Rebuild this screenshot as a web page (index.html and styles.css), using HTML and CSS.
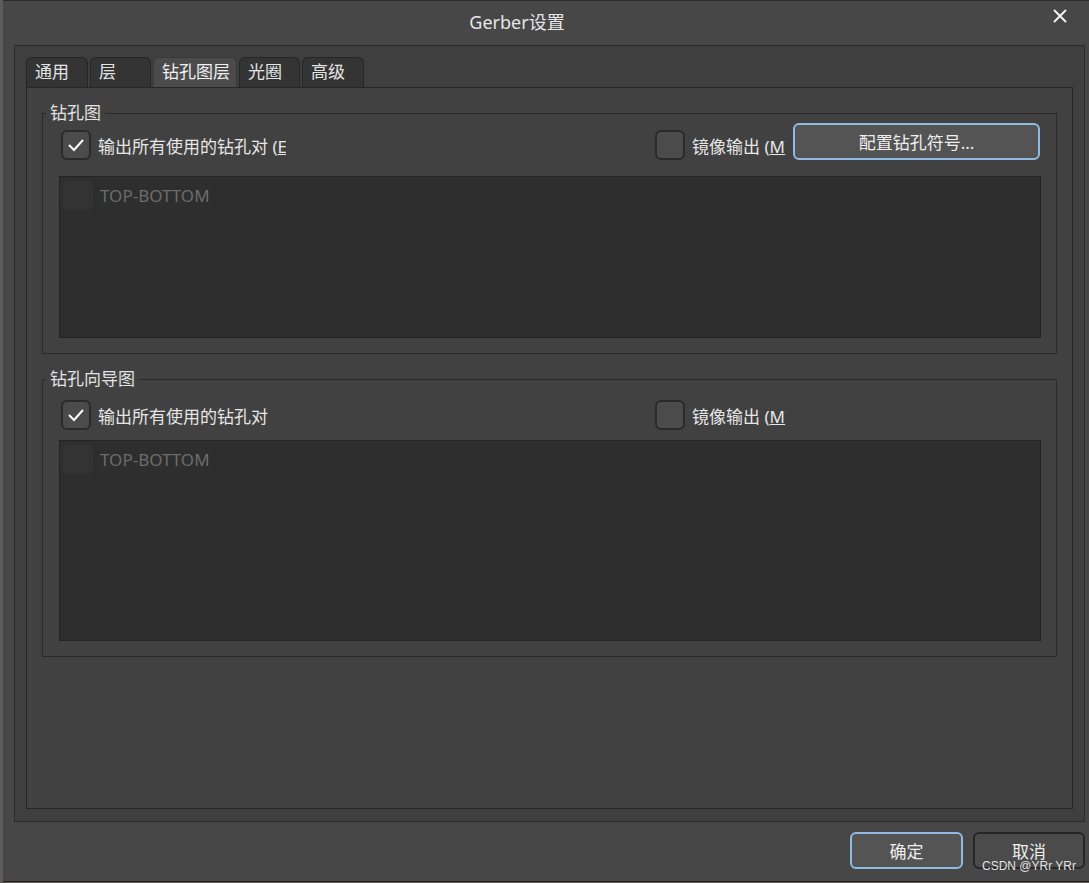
FILE: index.html
```html
<!DOCTYPE html>
<html lang="zh-CN">

<head>
    <meta charset="UTF-8">
    <title>Gerber设置</title>
    <link rel="stylesheet" href="styles.css">
</head>

<body>

    <div class="window">
        <div class="titlebar">
            <div class="title">Gerber设置</div>
            <div class="close">
                <svg width="16" height="16" viewBox="0 0 16 16">
                    <path d="M2 2 L14 14 M14 2 L2 14" stroke="#f2f2f2" stroke-width="2" fill="none"/>
                </svg>
            </div>
        </div>

        <div class="panel">
            <div class="tabs">
                <div class="tab" style="width: 62px">通用</div>
                <div class="tab" style="width: 61px">层</div>
                <div class="tab active" style="width: 84px">钻孔图层</div>
                <div class="tab" style="width: 61px">光圈</div>
                <div class="tab" style="width: 62px">高级</div>
            </div>

            <div class="pane">
                <fieldset class="group">
                    <legend>钻孔图</legend>
                    <div class="group-body">
                        <div class="row row-first">
                            <div class="option opt-main">
                                <span class="check checked">
                                    <svg width="18" height="14" viewBox="0 0 18 14"><path d="M2 7 L7 12 L16 2" stroke="#fff" stroke-width="2" fill="none"/></svg>
                                </span>
                                <span class="opt-label">输出所有使用的钻孔对 (<u>E</u>)</span>
                            </div>
                            <div class="option opt-mirror">
                                <span class="check"></span>
                                <span class="opt-label">镜像输出 (<u>M</u>)</span>
                            </div>
                            <button type="button" class="btn btn-focus">配置钻孔符号...</button>
                        </div>
                        <div class="list list-short">
                            <div class="list-item">
                                <span class="check disabled"></span>
                                <span>TOP-BOTTOM</span>
                            </div>
                        </div>
                    </div>
                </fieldset>

                <fieldset class="group group-second">
                    <legend>钻孔向导图</legend>
                    <div class="group-body">
                        <div class="row row-plain">
                            <div class="option opt-main">
                                <span class="check checked">
                                    <svg width="18" height="14" viewBox="0 0 18 14"><path d="M2 7 L7 12 L16 2" stroke="#fff" stroke-width="2" fill="none"/></svg>
                                </span>
                                <span class="opt-label">输出所有使用的钻孔对</span>
                            </div>
                            <div class="option opt-mirror">
                                <span class="check"></span>
                                <span class="opt-label">镜像输出 (<u>M</u>)</span>
                            </div>
                        </div>
                        <div class="list list-tall">
                            <div class="list-item">
                                <span class="check disabled"></span>
                                <span>TOP-BOTTOM</span>
                            </div>
                        </div>
                    </div>
                </fieldset>
            </div>
        </div>

        <div class="footer">
            <button type="button" class="btn btn-focus btn-ok">确定</button>
            <button type="button" class="btn btn-cancel">取消</button>
        </div>

        <div class="watermark">CSDN @YRr YRr</div>
    </div>

</body>

</html>
```

FILE: styles.css
```css
body {
    margin: 0;
    background-color: #5e5b59;
    font-family: "Noto Sans", "Noto Sans CJK SC", sans-serif;
    color: #e2e2e2;
}

.window {
    position: relative;
    width: 1086px;
    height: 882px;
    box-sizing: border-box;
    margin-left: 3px;
    background-color: #474747;
    border-top: 1px solid #2a2a2a;
    border-bottom: 1px solid #222;
}

.titlebar {
    display: flex;
    height: 44px;
    align-items: center;
}

.title {
    flex: 1;
    text-align: center;
    font-size: 18px;
    color: #e6e6e6;
    margin-top: -4px;
}

.close {
    width: 58px;
    display: flex;
    justify-content: center;
    margin-top: -14px;
}

.panel {
    width: 1071px;
    height: 777px;
    box-sizing: border-box;
    margin-left: 11px;
    padding: 11px 11px 12px 11px;
    background-color: #3f3f3f;
    border: 1px solid #2b2b2b;
}

.tabs {
    display: flex;
    gap: 2px;
    height: 30px;
}

.tab {
    box-sizing: border-box;
    height: 30px;
    padding-left: 8px;
    font-size: 17px;
    line-height: 28px;
    background-color: #343434;
    border: 1px solid #262626;
    border-bottom: none;
    border-radius: 6px 6px 0 0;
    color: #e4e4e4;
}

.tab.active {
    background-color: #4b4b4b;
    border-color: #3a3a3a;
    color: #f0f0f0;
}

.pane {
    height: 722px;
    box-sizing: border-box;
    padding: 15px 15px 0 15px;
    background-color: #414141;
    border: 1px solid #262626;
}

.group {
    width: 1015px;
    box-sizing: border-box;
    margin: 0;
    padding: 0;
    border: 1px solid #2a2a2a;
}

.group-second {
    margin-top: 15px;
}

.group legend {
    margin-left: 3px;
    padding: 0 4px;
    font-size: 17px;
    line-height: 20px;
    color: #e2e2e2;
}

.group-body {
    padding: 0 15px 15px 18px;
}

.row {
    display: grid;
    grid-template-columns: 594px 138px 247px;
    align-items: start;
}

.row-first {
    height: 37px;
}

.row-first .option {
    margin-top: 7px;
}

.row-plain {
    padding-top: 11px;
}

.option {
    display: flex;
    align-items: center;
    gap: 7px;
    overflow: hidden;
    white-space: nowrap;
    font-size: 17px;
    height: 30px;
}

.opt-main {
    width: 225px;
}

.opt-mirror {
    width: 131px;
}

.opt-label {
    color: #e6e6e6;
}

.check {
    flex: none;
    width: 30px;
    height: 30px;
    box-sizing: border-box;
    display: flex;
    align-items: center;
    justify-content: center;
    background-color: #4b4b4b;
    border: 2px solid #2a2a2a;
    border-radius: 6px;
}

.check.disabled {
    width: 32px;
    height: 31px;
    background-color: #333;
    border: 1px solid #2f2f2f;
}

.btn {
    font-family: "Noto Sans", "Noto Sans CJK SC", sans-serif;
    font-size: 17px;
    color: #eee;
    background-color: #545454;
    border: 2px solid #2b2b2b;
    border-radius: 6px;
    height: 37px;
    padding: 0;
    cursor: pointer;
}

.btn-focus {
    border-color: #8ebbe2;
}

.list {
    margin-left: -2px;
    box-sizing: border-box;
    background-color: #2e2e2e;
    border: 1px solid #242424;
    padding: 3px 2px;
}

.list-short {
    margin-top: 16px;
    height: 162px;
}

.list-tall {
    margin-top: 10px;
    height: 201px;
}

.list-item {
    display: flex;
    align-items: center;
    gap: 6px;
    font-size: 17px;
    color: #6c6c6c;
}

.footer {
    display: flex;
    justify-content: flex-end;
    gap: 10px;
    margin-top: 10px;
    padding-right: 4px;
}

.btn-ok {
    width: 113px;
}

.btn-cancel {
    width: 112px;
    background-color: #4b4b4b;
    border-color: #262626;
}

.watermark {
    position: absolute;
    left: 979px;
    top: 858px;
    font-family: "Liberation Sans", sans-serif;
    font-size: 12px;
    color: #e6e6e6;
    text-shadow: 0 0 1px #333;
}
```
